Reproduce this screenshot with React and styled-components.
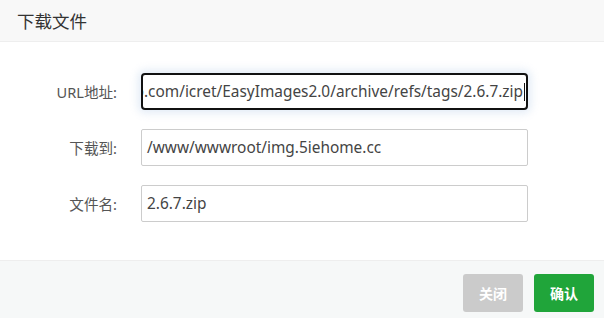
import React from "react";
import styled, { createGlobalStyle } from "styled-components";

const GlobalStyle = createGlobalStyle`
  html, body {
    margin: 0;
    padding: 0;
    background: #fff;
    font-family: "Noto Sans", "Noto Sans CJK SC", sans-serif;
  }
`;

const Dialog = styled.div`
  width: 604px;
  height: 318px;
  display: flex;
  flex-direction: column;
  background: #fff;
  overflow: hidden;
`;

const Header = styled.div`
  height: 41px;
  flex-shrink: 0;
  display: flex;
  align-items: center;
  padding-left: 17px;
  background: #f8f8f8;
  border-bottom: 1px solid #eee;
  color: #333;
  font-size: 17.5px;
  font-family: "Noto Sans CJK SC", sans-serif;
`;

const Body = styled.div`
  flex: 1;
  display: flex;
  flex-direction: column;
  gap: 19px;
  padding-top: 31px;
`;

const Row = styled.div`
  display: flex;
  align-items: center;
  height: 37px;
`;

const Label = styled.label`
  width: 117px;
  flex-shrink: 0;
  margin-right: 24px;
  text-align: right;
  font-size: 14.6px;
  color: #555;
  font-family: "Noto Sans", "Noto Sans CJK SC", sans-serif;
`;

const Field = styled.div`
  box-sizing: border-box;
  width: 387px;
  height: 37px;
  display: flex;
  align-items: center;
  justify-content: ${(p) => (p.$focused ? "flex-end" : "flex-start")};
  overflow: hidden;
  padding: 0 ${(p) => (p.$focused ? "1px" : "5px")} 0 5px;
  border: ${(p) => (p.$focused ? "2px solid #111" : "1px solid #ccc")};
  border-radius: ${(p) => (p.$focused ? "4px" : "2px")};
  box-shadow: ${(p) =>
    p.$focused ? "0 0 8px 3px rgba(190, 210, 235, 0.45)" : "none"};
  background: #fff;
  color: #444;
  font-size: 15.4px;
  font-family: "Noto Sans", sans-serif;
`;

const Value = styled.span`
  white-space: nowrap;
  flex-shrink: 0;
`;

const Caret = styled.span`
  display: inline-block;
  width: 1px;
  height: 18px;
  background: #111;
  margin-left: 1px;
  flex-shrink: 0;
`;

const Footer = styled.div`
  height: 58px;
  flex-shrink: 0;
  box-sizing: border-box;
  border-top: 1px solid #eee;
  background: #f6f8f8;
  display: flex;
  justify-content: flex-end;
  align-items: flex-start;
  gap: 11px;
  padding: 13px 10px 0 0;
`;

const Button = styled.button`
  width: 60px;
  height: 38px;
  border: 0;
  border-radius: 3px;
  color: #fff;
  font-size: 14px;
  font-weight: bold;
  font-family: "Noto Sans CJK SC", sans-serif;
  background: ${(p) => (p.$primary ? "#20a53a" : "#cbcbcb")};
  cursor: pointer;
`;

const fields = [
  {
    label: "URL地址:",
    value: "https://github.com/icret/EasyImages2.0/archive/refs/tags/2.6.7.zip",
    focused: true,
  },
  { label: "下载到:", value: "/www/wwwroot/img.5iehome.cc" },
  { label: "文件名:", value: "2.6.7.zip" },
];

export default function App() {
  return (
    <>
      <GlobalStyle />
      <Dialog>
        <Header>下载文件</Header>
        <Body>
          {fields.map((f) => (
            <Row key={f.label}>
              <Label>{f.label}</Label>
              <Field $focused={f.focused}>
                <Value>{f.value}</Value>
                {f.focused && <Caret />}
              </Field>
            </Row>
          ))}
        </Body>
        <Footer>
          <Button>关闭</Button>
          <Button $primary>确认</Button>
        </Footer>
      </Dialog>
    </>
  );
}
